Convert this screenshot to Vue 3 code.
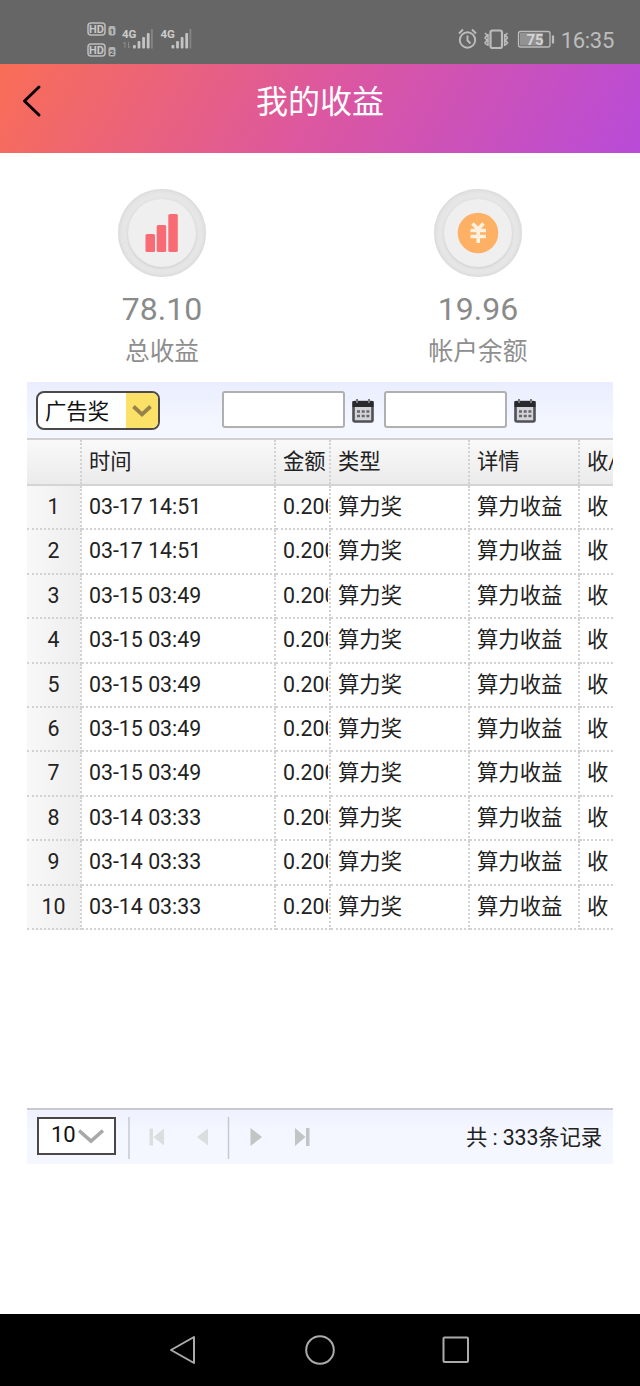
<script setup>
const stats = [
  { id: 'total', value: '78.10', label: '总收益' },
  { id: 'balance', value: '19.96', label: '帐户余额' },
]
const headers = ['', '时间', '金额', '类型', '详情', '收/支']
const times = [
  '03-17 14:51', '03-17 14:51', '03-15 03:49', '03-15 03:49', '03-15 03:49',
  '03-15 03:49', '03-15 03:49', '03-14 03:33', '03-14 03:33', '03-14 03:33',
]
const rows = times.map((t, i) => [i + 1, t, '0.200', '算力奖', '算力收益', '收'])
const bars = [0, 1, 2, 3]
</script>

<template>
  <div class="screen">
    <div class="status">
      <svg class="left" width="112" height="40" viewBox="0 0 112 40">
        <g v-for="n in 2" :key="n" :transform="`translate(0 ${(n - 1) * 21})`">
          <rect x="1" y="1" width="17" height="12" rx="3" fill="none" stroke="#bdbdbd" stroke-width="1.5" />
          <text x="9.5" y="11" text-anchor="middle" class="hd">HD</text>
          <rect x="21.5" y="4" width="7" height="9.5" rx="2" fill="#b2b2b2" />
          <text x="25" y="12" text-anchor="middle" class="sim">{{ n }}</text>
        </g>
        <g v-for="n in 2" :key="'s' + n" :transform="`translate(${35 + (n - 1) * 38.5} 0)`">
          <text x="0" y="16" class="net">4G</text>
          <rect v-for="b in bars" :key="b" :x="11 + b * 4.6" :y="23 - b * 4" width="2.8" :height="3.5 + b * 4" rx="1" fill="#c4c4c4" />
          <rect x="29" y="7" width="1.8" height="19.5" fill="#858585" />
          <path v-if="n === 1" d="M3 20v6m-2-4l2-2M6.500 20v6l2-2" stroke="#8b8b8b" fill="none" />
        </g>
      </svg>
      <div class="right">
        <svg width="98" height="24" viewBox="0 0 98 24" fill="none" stroke="#bcbcbc">
          <circle cx="9.500" cy="13" r="7.700" stroke-width="1.900" />
          <path d="M9.500 8.500v5l3 3M1 6.500l4-4M14 2.500l4 4" stroke-width="1.900" />
          <rect x="32.500" y="3.500" width="11.500" height="17.500" rx="2" stroke-width="2.200" />
          <path d="M27 6l2 2-2 3 2 2-2 3 2 2M30 7v12M49.500 6l-2 2 2 3-2 2 2 3-2 2M46.700 7v12" stroke-width="1.500" />
          <rect x="60.500" y="4.500" width="31.500" height="15.500" rx="2" stroke-width="1.300" />
          <rect x="62" y="6" width="22.500" height="12.500" fill="#929292" stroke="none" />
          <path d="M95 8.500v8" stroke-width="2.200" />
          <text x="77" y="18" text-anchor="middle" class="batt">75</text>
        </svg>
        <span class="clock">16:35</span>
      </div>
    </div>

    <header class="bar">
      <svg class="back" width="20" height="34" viewBox="0 0 20 34"><path d="M17 3L2.500 17l14.500 14" fill="none" stroke="#0a0205" stroke-width="3" stroke-linecap="round" stroke-linejoin="round" /></svg>
      <h1>我的收益</h1>
    </header>

    <section class="stats">
      <div v-for="s in stats" :key="s.id" class="stat">
        <div class="disc">
          <div class="inner">
            <svg v-if="s.id === 'total'" width="36" height="40" viewBox="0 0 36 40" fill="#f96b74">
              <rect x="1.500" y="21" width="9.500" height="18" rx="1.500" />
              <rect x="12.700" y="12" width="9.500" height="27" rx="1.500" />
              <rect x="24.300" y="1" width="9.500" height="38" rx="1.500" />
            </svg>
            <svg v-else width="42" height="42" viewBox="0 0 42 42">
              <circle cx="21" cy="21" r="20.300" fill="#feb064" />
              <path d="M15.500 11.500l5.500 5.500 5.500-5.500M13.500 18.500h15.500M13.500 24.500h15.500M21.200 17v14" fill="none" stroke="#fff1df" stroke-width="3.600" />
            </svg>
          </div>
        </div>
        <div class="value">{{ s.value }}</div>
        <div class="label">{{ s.label }}</div>
      </div>
    </section>

    <section class="panel">
      <div class="tools">
        <div class="kind"><span>广告奖</span><i><svg width="20" height="14" viewBox="0 0 20 14"><path d="M1.500 2.500L10 10.500l8.500-8" fill="none" stroke="#97824b" stroke-width="3.800" /></svg></i></div>
        <template v-for="n in 2" :key="n">
          <div class="date"></div>
          <svg class="cal" width="22" height="24" viewBox="0 0 22 24">
            <rect x="1.500" y="3" width="19" height="19.500" rx="1.500" fill="#d4d4d8" stroke="#505056" stroke-width="2.600" />
            <path d="M.5 2h21v6H.5z" fill="#29292d" />
            <path d="M5 0v4M17 0v4" stroke="#77777b" stroke-width="2" />
            <path d="M5 12.500h12.500M5 17h12.500" stroke="#66666c" stroke-width="2.600" stroke-dasharray="3 1.700" />
          </svg>
        </template>
      </div>
      <div class="row head"><div v-for="(h, i) in headers" :key="i" class="cell"><span>{{ h }}</span></div></div>
      <div class="body">
        <div v-for="(r, i) in rows" :key="i" class="row"><div v-for="(c, j) in r" :key="j" class="cell"><span>{{ c }}</span></div></div>
      </div>
      <div class="pager">
        <div class="size"><span>10</span><svg width="26" height="18" viewBox="0 0 26 18"><path d="M1 2.500l12 10.500L25 2.500" fill="none" stroke="#a8a8a8" stroke-width="3.600" /></svg></div>
        <svg class="nav" width="190" height="44" viewBox="0 0 190 44">
          <path d="M1 1v42M100.500 1v42" stroke="#c8c9cf" stroke-width="1.500" />
          <path d="M21.500 12.500h3.500v17h-3.500zM36 12.500v17L25.500 21zM80 12.500v17L69 21z" fill="#d9dfdf" />
          <path d="M122.500 12v18L134 21zM167 12v18l10.500-9zM178 12h3.500v18H178z" fill="#bfc6c4" />
        </svg>
        <span class="total">共 : 333条记录</span>
      </div>
    </section>

    <nav class="keys">
      <svg width="28" height="32" viewBox="0 0 28 32"><path d="M25 3v26L2 16z" /></svg>
      <svg width="32" height="32" viewBox="0 0 32 32"><circle cx="16" cy="16" r="13.800" /></svg>
      <svg width="30" height="32" viewBox="0 0 30 32"><rect x="2.500" y="3.500" width="24.500" height="24.500" rx="1" /></svg>
    </nav>
  </div>
</template>

<style>
body { margin: 0; }
</style>

<style scoped>
* { box-sizing: border-box; }
svg { display: block; flex: none; }
.screen { width: 640px; height: 1386px; display: flex; flex-direction: column; background: #fff; color: #222; font-family: Roboto, "Noto Sans CJK SC", sans-serif; overflow: hidden; }
.status { height: 64px; flex: none; background: #666; display: flex; justify-content: space-between; padding: 22px 26px 0 87px; }
.left text { font-family: Roboto, sans-serif; font-weight: 700; }
.left .hd { font-size: 11px; fill: #c8c8c8; }
.left .sim { font-size: 8px; fill: #555; }
.left .net { font-size: 11.500px; fill: #ccc; }
.batt { font: 700 15px Roboto, sans-serif; fill: #d4d4d4; stroke: none; }
.right { display: flex; align-items: flex-start; gap: 5px; padding-top: 5px; }
.clock { font-size: 22px; line-height: 28px; color: #bdbdbd; letter-spacing: -.3px; }
.bar { height: 89px; flex: none; display: grid; grid-template-columns: 80px 1fr 80px; background: linear-gradient(119deg, #f96e56 0%, #dc57a0 50%, #b84bd8 100%); }
.back { margin: 20px 0 0 22px; }
h1 { margin: 0; padding-top: 14px; text-align: center; font-size: 32px; font-weight: 400; line-height: 48px; color: #fff; }
.stats { height: 229px; flex: none; display: grid; grid-template-columns: 316px 316px; padding: 36px 0 0 4px; }
.stat { display: flex; flex-direction: column; align-items: center; }
.disc { width: 88px; height: 88px; border-radius: 50%; background: #e6e6e6; box-shadow: inset 0 0 4px #cfcfcf; display: grid; place-items: center; }
.inner { width: 68px; height: 68px; border-radius: 50%; background: #efefef; box-shadow: 0 1px 3px #ccc; display: grid; place-items: center; }
.value { margin-top: 14px; font-size: 32px; line-height: 36px; color: #8a8a8a; }
.label { margin-top: 7px; font-size: 24.700px; line-height: 36px; color: #8e8e8e; }
.panel { width: 586px; margin-left: 27px; height: 782px; flex: none; display: flex; flex-direction: column; font-size: 21.333px; overflow: hidden; }
.tools { height: 58px; flex: none; display: flex; align-items: flex-start; padding: 9px 0 0 9px; background: linear-gradient(#e9edff, #f4f7ff 75%); border-bottom: 2px solid #d0d0d0; }
.kind { width: 124px; height: 39px; border: 2px solid #4e4949; border-radius: 8px; background: #fff; display: flex; overflow: hidden; margin-right: 62px; }
.kind span { flex: 1; padding-left: 7px; line-height: 38px; white-space: nowrap; color: #111; }
.kind i { width: 32px; background: #fce169; display: grid; place-items: center; }
.date { width: 123px; height: 37px; border: 2px solid #b0b0b0; border-radius: 3px; background: #fff; }
.cal { margin: 8px 10px 0 7px; }
.row { display: grid; grid-template-columns: 55px 194px 55px 139px 110px 80px; height: 44.420px; }
.cell { border-right: 2px dotted #d2d2d2; border-bottom: 2px dotted #d2d2d2; padding: 0 1px 0 7px; line-height: 42px; white-space: nowrap; overflow: hidden; color: #222; }
.cell span { display: block; overflow: hidden; }
.cell:first-child { background: linear-gradient(90deg, #f8f8f8, #eee); padding: 0; text-align: center; }
.head { height: 46px; flex: none; background: linear-gradient(#f9f9f9, #ebebeb); border-bottom: 2px solid #d4d4d4; }
.head .cell { border-bottom: 0; line-height: 44px; }
.head .cell:first-child { background: none; }
.body { height: 622px; flex: none; }
.pager { height: 56px; flex: none; border-top: 2px solid #c8c8ce; background: linear-gradient(#eff1ff, #f4f7ff 40%); display: flex; align-items: flex-start; padding: 7px 11px 0 10px; }
.size { width: 79px; height: 38px; border: 2px solid #4c4747; background: #fff; display: flex; padding-left: 12px; color: #111; font-size: 22px; line-height: 32px; }
.size svg { margin: 9px 0 0 2px; }
.nav { margin: -1px 0 0 12px; }
.total { margin-left: auto; line-height: 42px; white-space: nowrap; letter-spacing: -.1px; }
.keys { height: 72px; margin-top: auto; flex: none; background: #000; display: flex; padding: 20px 0 0 169px; }
.keys svg { fill: none; stroke: #ababab; stroke-width: 2; stroke-linejoin: round; margin-right: 107px; }
.keys svg:nth-child(2) { margin-right: 105px; }
</style>
